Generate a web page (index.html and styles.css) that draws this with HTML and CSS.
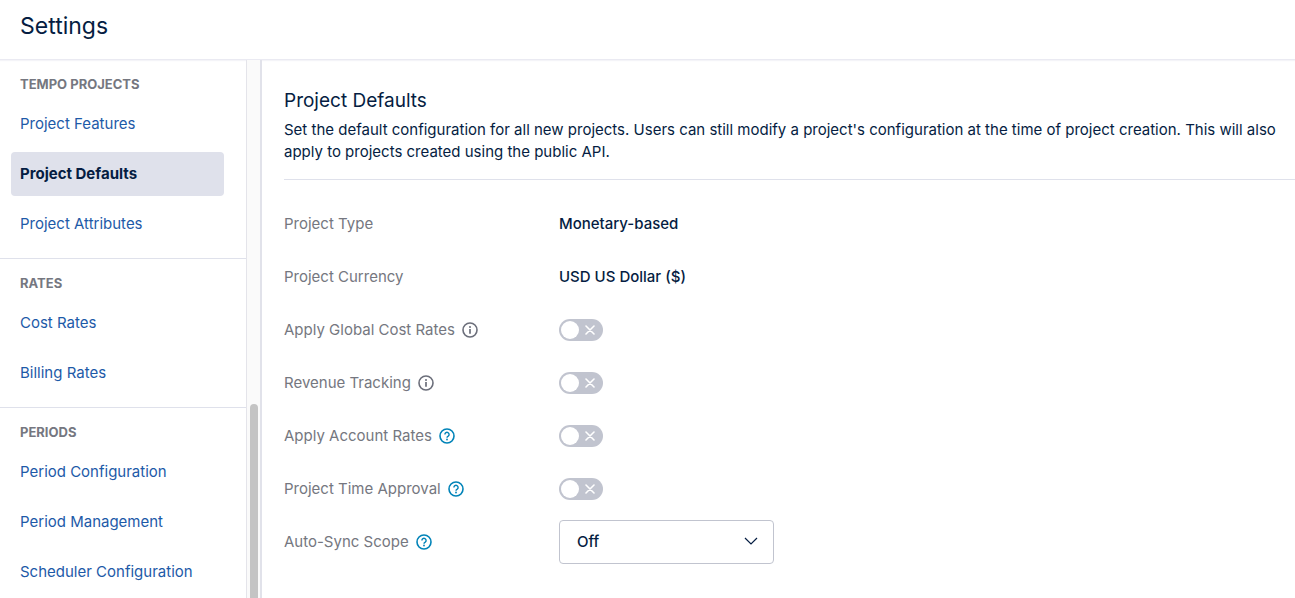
FILE: index.html
```html
<!DOCTYPE html>
<html lang="en">
<head>
    <meta charset="UTF-8">
    <meta name="viewport" content="width=device-width, initial-scale=1.0">
    <title>Settings</title>
    <link rel="stylesheet" href="styles.css">
</head>
<body>
    <!-- shared icons -->
    <svg class="sprite" aria-hidden="true">
        <symbol id="icon-info" viewBox="0 0 16 16">
            <circle cx="8" cy="8" r="7" fill="none" stroke="currentColor" stroke-width="1.6"/>
            <circle cx="8" cy="4.9" r="1" fill="currentColor"/>
            <path d="M8 7v4.7" stroke="currentColor" stroke-width="1.7"/>
        </symbol>
        <symbol id="icon-help" viewBox="0 0 16 16">
            <circle cx="8" cy="8" r="7" fill="none" stroke="currentColor" stroke-width="1.6"/>
            <path d="M5.9 6.4a2.1 2.1 0 1 1 3.3 1.7c-.8.5-1.2.8-1.2 1.6" fill="none" stroke="currentColor" stroke-width="1.4"/>
            <circle cx="8" cy="11.5" r=".9" fill="currentColor"/>
        </symbol>
        <symbol id="icon-cross" viewBox="0 0 10 10">
            <path d="M1 1l8 8M9 1l-8 8" stroke="currentColor" stroke-width="1.6" stroke-linecap="round"/>
        </symbol>
    </svg>

    <header class="header">
        <h1>Settings</h1>
    </header>

    <div class="layout">
        <nav class="sidebar">
            <section class="nav-section">
                <h2>Tempo Projects</h2>
                <a href="#">Project Features</a>
                <a href="#" class="active">Project Defaults</a>
                <a href="#">Project Attributes</a>
            </section>
            <section class="nav-section">
                <h2>Rates</h2>
                <a href="#">Cost Rates</a>
                <a href="#">Billing Rates</a>
            </section>
            <section class="nav-section">
                <h2>Periods</h2>
                <a href="#">Period Configuration</a>
                <a href="#">Period Management</a>
                <a href="#">Scheduler Configuration</a>
            </section>
        </nav>
        <div class="scrollbar">
            <div class="scrollbar-thumb"></div>
        </div>

        <main class="content">
            <div class="intro">
                <h2>Project Defaults</h2>
                <p>Set the default configuration for all new projects. Users can still modify a project's configuration at the time of project creation. This will also apply to projects created using the public API.</p>
            </div>

            <form class="settings">
                <div class="row">
                    <span class="name">Project Type</span>
                    <span class="value">Monetary-based</span>
                </div>
                <div class="row">
                    <span class="name">Project Currency</span>
                    <span class="value">USD US Dollar ($)</span>
                </div>
                <div class="row">
                    <div class="name">
                        <label for="cost-rates">Apply Global Cost Rates</label>
                        <svg class="icon"><use href="#icon-info"/></svg>
                    </div>
                    <div class="toggle">
                        <input type="checkbox" id="cost-rates">
                        <svg class="cross"><use href="#icon-cross"/></svg>
                    </div>
                </div>
                <div class="row">
                    <div class="name">
                        <label for="revenue">Revenue Tracking</label>
                        <svg class="icon"><use href="#icon-info"/></svg>
                    </div>
                    <div class="toggle">
                        <input type="checkbox" id="revenue">
                        <svg class="cross"><use href="#icon-cross"/></svg>
                    </div>
                </div>
                <div class="row">
                    <div class="name">
                        <label for="account-rates">Apply Account Rates</label>
                        <svg class="icon help"><use href="#icon-help"/></svg>
                    </div>
                    <div class="toggle">
                        <input type="checkbox" id="account-rates">
                        <svg class="cross"><use href="#icon-cross"/></svg>
                    </div>
                </div>
                <div class="row">
                    <div class="name">
                        <label for="approval">Project Time Approval</label>
                        <svg class="icon help"><use href="#icon-help"/></svg>
                    </div>
                    <div class="toggle">
                        <input type="checkbox" id="approval">
                        <svg class="cross"><use href="#icon-cross"/></svg>
                    </div>
                </div>
                <div class="row">
                    <div class="name">
                        <label for="auto-sync">Auto-Sync Scope</label>
                        <svg class="icon help"><use href="#icon-help"/></svg>
                    </div>
                    <div class="select">
                        <select id="auto-sync">
                            <option>Off</option>
                            <option>On</option>
                        </select>
                        <svg class="chevron" viewBox="0 0 14 8"><path d="M1 1l6 6 6-6" fill="none" stroke="currentColor" stroke-width="1.2"/></svg>
                    </div>
                </div>
            </form>
        </main>
    </div>
</body>
</html>
```

FILE: styles.css
```css
* {
    box-sizing: border-box;
    margin: 0;
    padding: 0;
}

body {
    display: flex;
    flex-direction: column;
    height: 100vh;
    overflow: hidden;
    font-family: Inter, "Liberation Sans", sans-serif;
    font-size: 15px;
    line-height: 22px;
    color: #051d42;
    background-color: #fff;
}

.sprite {
    display: none;
}

.header {
    padding: 10px 20px 17px;
    border-bottom: 1px solid #eaeaf2;
    box-shadow: 0 1px 1px #f4f4f8;
}

.header h1 {
    font-size: 23px;
    font-weight: 400;
    line-height: 32px;
}

.layout {
    display: flex;
    flex: 1;
    min-height: 0;
}

/* sidebar */
.sidebar {
    flex: none;
    width: 247px;
    overflow: hidden;
    border-right: 1px solid #e4e4ea;
}

.nav-section {
    padding: 16px 22px 12px 11px;
    border-bottom: 1px solid #dfe1eb;
}

.nav-section h2 {
    margin-bottom: 10px;
    padding-left: 9px;
    font-size: 13px;
    font-weight: 700;
    line-height: 16px;
    text-transform: uppercase;
    color: #757780;
}

.nav-section a {
    display: block;
    padding: 11px 9px;
    border-radius: 4px;
    color: #1d5aa8;
    text-decoration: none;
}

.nav-section a + a {
    margin-top: 6px;
}

.nav-section a.active {
    font-weight: 700;
    color: #051d42;
    background-color: #dfe1eb;
}

.scrollbar {
    display: flex;
    flex: none;
    flex-direction: column;
    justify-content: flex-end;
    width: 15px;
    padding: 0 3px;
    border-right: 2px solid #e1e2ea;
    background-color: #fafafa;
}

.scrollbar-thumb {
    width: 8px;
    height: 36%;
    border-radius: 4px 4px 0 0;
    background-color: #c4c4c4;
}

/* content */
.content {
    flex: 1;
    min-width: 0;
    padding: 28px 0 0 22px;
}

.intro {
    padding-bottom: 16px;
    border-bottom: 1px solid #dfe1eb;
}

.intro h2 {
    margin-bottom: 5px;
    font-size: 19px;
    font-weight: 400;
    line-height: 26px;
}

.intro p {
    padding-right: 12px;
}

.settings {
    display: flex;
    flex-direction: column;
    gap: 9px;
    padding-top: 22px;
}

.row {
    display: grid;
    grid-template-columns: 275px 1fr;
    align-items: center;
    min-height: 44px;
}

.name {
    display: flex;
    align-items: center;
    gap: 7px;
    color: #757780;
}

.value {
    font-weight: 500;
}

.icon {
    width: 16px;
    height: 16px;
    color: #6b6e7a;
}

.icon.help {
    color: #0083b8;
}

.toggle {
    position: relative;
    width: 44px;
    height: 22px;
}

.toggle input {
    display: block;
    width: 44px;
    height: 22px;
    padding: 2px;
    border-radius: 11px;
    appearance: none;
    background-color: #c1c4cf;
    cursor: pointer;
}

.toggle input::before {
    content: "";
    display: block;
    width: 18px;
    height: 18px;
    border-radius: 50%;
    background-color: #fff;
}

.toggle input:checked {
    padding-left: 24px;
    background-color: #0083b8;
}

.toggle input:checked + .cross {
    display: none;
}

.cross {
    position: absolute;
    top: 6px;
    right: 8px;
    width: 10px;
    height: 10px;
    color: #fff;
    pointer-events: none;
}

.select {
    position: relative;
    width: 215px;
}

.select select {
    display: block;
    width: 100%;
    height: 44px;
    padding: 0 17px;
    border: 1px solid #c1c4cf;
    border-radius: 4px;
    appearance: none;
    font: inherit;
    font-weight: 500;
    color: inherit;
    background-color: #fff;
}

.chevron {
    position: absolute;
    top: 17px;
    right: 16px;
    width: 14px;
    height: 8px;
    pointer-events: none;
}
```
